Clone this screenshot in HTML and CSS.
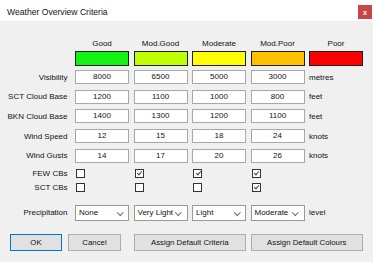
FILE: index.html
```html
<!DOCTYPE html>
<html lang="en">
<head>
  <meta charset="UTF-8">
  <title>Weather Overview Criteria</title>
  <link rel="stylesheet" href="styles.css">
</head>
<body>
  <div class="window">
    <div class="titlebar">
      <span class="title">Weather Overview Criteria</span>
      <button class="close">x</button>
    </div>

    <div class="content">
      <div class="row head">
        <span></span>
        <span>Good</span>
        <span>Mod.Good</span>
        <span>Moderate</span>
        <span>Mod.Poor</span>
        <span>Poor</span>
      </div>

      <div class="row swatches">
        <span></span>
        <span class="swatch good"></span>
        <span class="swatch modgood"></span>
        <span class="swatch moderate"></span>
        <span class="swatch modpoor"></span>
        <span class="swatch poor"></span>
      </div>

      <div class="row field">
        <label>Visibility</label>
        <span class="box">8000</span>
        <span class="box">6500</span>
        <span class="box">5000</span>
        <span class="box">3000</span>
        <span class="unit">metres</span>
      </div>
      <div class="row field">
        <label>SCT Cloud Base</label>
        <span class="box">1200</span>
        <span class="box">1100</span>
        <span class="box">1000</span>
        <span class="box">800</span>
        <span class="unit">feet</span>
      </div>
      <div class="row field">
        <label>BKN Cloud Base</label>
        <span class="box">1400</span>
        <span class="box">1300</span>
        <span class="box">1200</span>
        <span class="box">1100</span>
        <span class="unit">feet</span>
      </div>
      <div class="row field">
        <label>Wind Speed</label>
        <span class="box">12</span>
        <span class="box">15</span>
        <span class="box">18</span>
        <span class="box">24</span>
        <span class="unit">knots</span>
      </div>
      <div class="row field">
        <label>Wind Gusts</label>
        <span class="box">14</span>
        <span class="box">17</span>
        <span class="box">20</span>
        <span class="box">26</span>
        <span class="unit">knots</span>
      </div>

      <div class="row check first">
        <label>FEW CBs</label>
        <span class="cb"></span>
        <span class="cb on"></span>
        <span class="cb on"></span>
        <span class="cb on"></span>
      </div>
      <div class="row check">
        <label>SCT CBs</label>
        <span class="cb"></span>
        <span class="cb"></span>
        <span class="cb"></span>
        <span class="cb on"></span>
      </div>

      <div class="row precip">
        <label>Precipitation</label>
        <span class="select">None</span>
        <span class="select">Very Light</span>
        <span class="select">Light</span>
        <span class="select">Moderate</span>
        <span class="unit">level</span>
      </div>

      <div class="row actions">
        <div class="pair">
          <button class="btn ok">OK</button>
          <button class="btn cancel">Cancel</button>
        </div>
        <button class="btn criteria">Assign Default Criteria</button>
        <button class="btn colours">Assign Default Colours</button>
      </div>
    </div>
  </div>
</body>
</html>
```

FILE: styles.css
```css
body {
  margin: 0;
  background-color: #f0f0f0;
  font-family: "Liberation Sans", Arial, sans-serif;
  font-size: 8px;
  color: #111;
}

.window {
  width: 373px;
  height: 262px;
  background-color: #f0f0f0;
}

.titlebar {
  height: 21px;
  background-color: white;
  display: flex;
  align-items: center;
  justify-content: space-between;
  padding: 0 1px 0 7px;
  box-sizing: border-box;
}

.title {
  font-size: 8.6px;
  color: #111;
  padding-top: 2px;
}

.close {
  width: 14px;
  height: 14px;
  margin-top: 3px;
  padding: 0;
  border: none;
  background-color: #c74646;
  color: white;
  font-family: "Liberation Sans", Arial, sans-serif;
  font-size: 7px;
  font-weight: bold;
  line-height: 13px;
}

.content {
  padding-top: 16px;
}

.row {
  display: grid;
  grid-template-columns: 70.5px repeat(5, 54px);
  column-gap: 4.5px;
  align-items: center;
}

.row label {
  text-align: right;
  padding-right: 3px;
  white-space: nowrap;
}

.head {
  height: 12px;
  text-align: center;
}

.swatches {
  margin-top: 2px;
  height: 15px;
}

.swatch {
  height: 15px;
  box-sizing: border-box;
  border: 1px solid #1e1e1e;
}

.swatch.good { background-color: #14f214; }
.swatch.modgood { background-color: #c0ff00; }
.swatch.moderate { background-color: #ffff00; }
.swatch.modpoor { background-color: #ffc000; }
.swatch.poor { background-color: #ff0000; }

.field {
  height: 14px;
  margin-top: 5.7px;
}

.swatches + .field {
  margin-top: 4px;
}

.box {
  height: 14px;
  box-sizing: border-box;
  border: 1px solid #a8a8a8;
  background-color: white;
  text-align: center;
  line-height: 12px;
}

.check {
  height: 10px;
  margin-top: 4px;
}

.check.first {
  margin-top: 6px;
}

.cb {
  width: 9px;
  height: 9px;
  margin-left: 1px;
  box-sizing: border-box;
  border: 1px solid #333;
  background-color: white;
  position: relative;
}

.cb.on::after {
  content: "";
  position: absolute;
  left: 2.5px;
  top: 0px;
  width: 2px;
  height: 4px;
  border: solid #444;
  border-width: 0 1px 1px 0;
  transform: rotate(40deg);
}

.precip {
  height: 16px;
  margin-top: 12.2px;
}

.select {
  height: 16px;
  box-sizing: border-box;
  border: 1px solid #9a9a9a;
  background-color: white;
  line-height: 14px;
  padding-left: 3px;
  position: relative;
  white-space: nowrap;
}

.select::after {
  content: "";
  position: absolute;
  right: 6px;
  top: 4px;
  width: 3.5px;
  height: 3.5px;
  border: solid #666;
  border-width: 0 1px 1px 0;
  transform: rotate(45deg);
}

.actions {
  margin-top: 13px;
  height: 17px;
}

.pair {
  grid-column: 1 / 3;
  display: flex;
  gap: 6px;
  padding-left: 10px;
}

.btn {
  height: 17px;
  padding: 0;
  border: 1px solid #adadad;
  background-color: #e1e1e1;
  font-family: "Liberation Sans", Arial, sans-serif;
  font-size: 7.8px;
  color: #111;
}

.btn.ok {
  width: 52px;
  border-color: #0078d7;
}

.btn.cancel { width: 53px; }
.btn.criteria { grid-column: 3 / 5; }
.btn.colours { grid-column: 5 / 7; }
```
